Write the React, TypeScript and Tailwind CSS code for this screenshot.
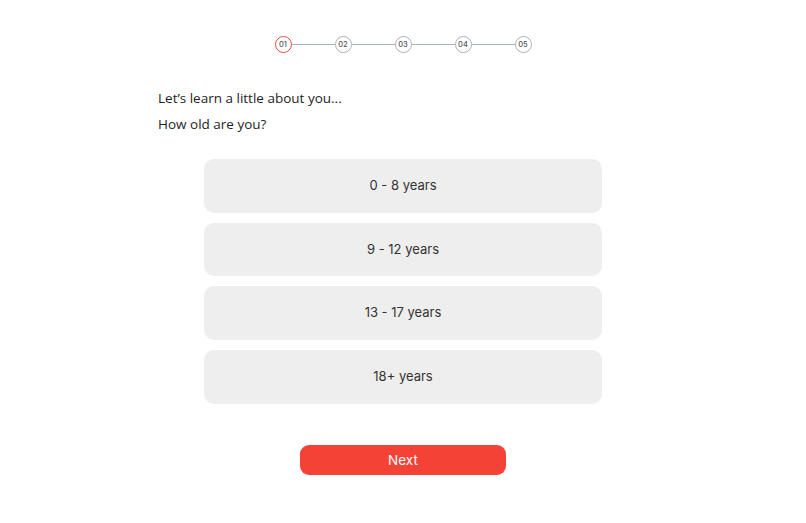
const steps = ["01", "02", "03", "04", "05"];
const options = ["0 - 8 years", "9 - 12 years", "13 - 17 years", "18+ years"];

export default function App() {
  return (
    <div className="min-h-screen bg-white flex flex-col items-center pt-[36px]">
      <div className="flex items-center">
        {steps.map((s, i) => (
          <div key={s} className="flex items-center">
            {i > 0 && <div className="w-[43px] h-px bg-[#a9b1bb]" />}
            <div
              className={`w-[17px] h-[17px] rounded-full border flex items-center justify-center text-[7.5px] font-medium text-[#555] ${
                i === 0 ? "border-[#e8483b] border-[1.5px]" : "border-[#a9b1bb]"
              }`}
              style={{ fontFamily: "Inter, sans-serif" }}
            >
              {s}
            </div>
          </div>
        ))}
      </div>

      <div className="w-[490px] mt-[36px] text-[13.5px] text-[#1e1e1e]" style={{ fontFamily: "'Open Sans', sans-serif" }}>
        <p className="leading-[18px]">Let’s learn a little about you...</p>
        <p className="leading-[18px] mt-[8px]">How old are you?</p>
      </div>

      <div className="w-[398px] mt-[26px] flex flex-col gap-[10px]" style={{ fontFamily: "Inter, sans-serif" }}>
        {options.map((o) => (
          <button
            key={o}
            className="h-[53.7px] w-full rounded-[10px] bg-[#eeeeee] text-[13px] text-[#333]"
          >
            {o}
          </button>
        ))}
      </div>

      <button
        className="mt-[41px] w-[206px] h-[30px] rounded-[9px] bg-[#f44336] text-white text-[13.5px]"
        style={{ fontFamily: "Inter, sans-serif" }}
      >
        Next
      </button>
    </div>
  );
}
